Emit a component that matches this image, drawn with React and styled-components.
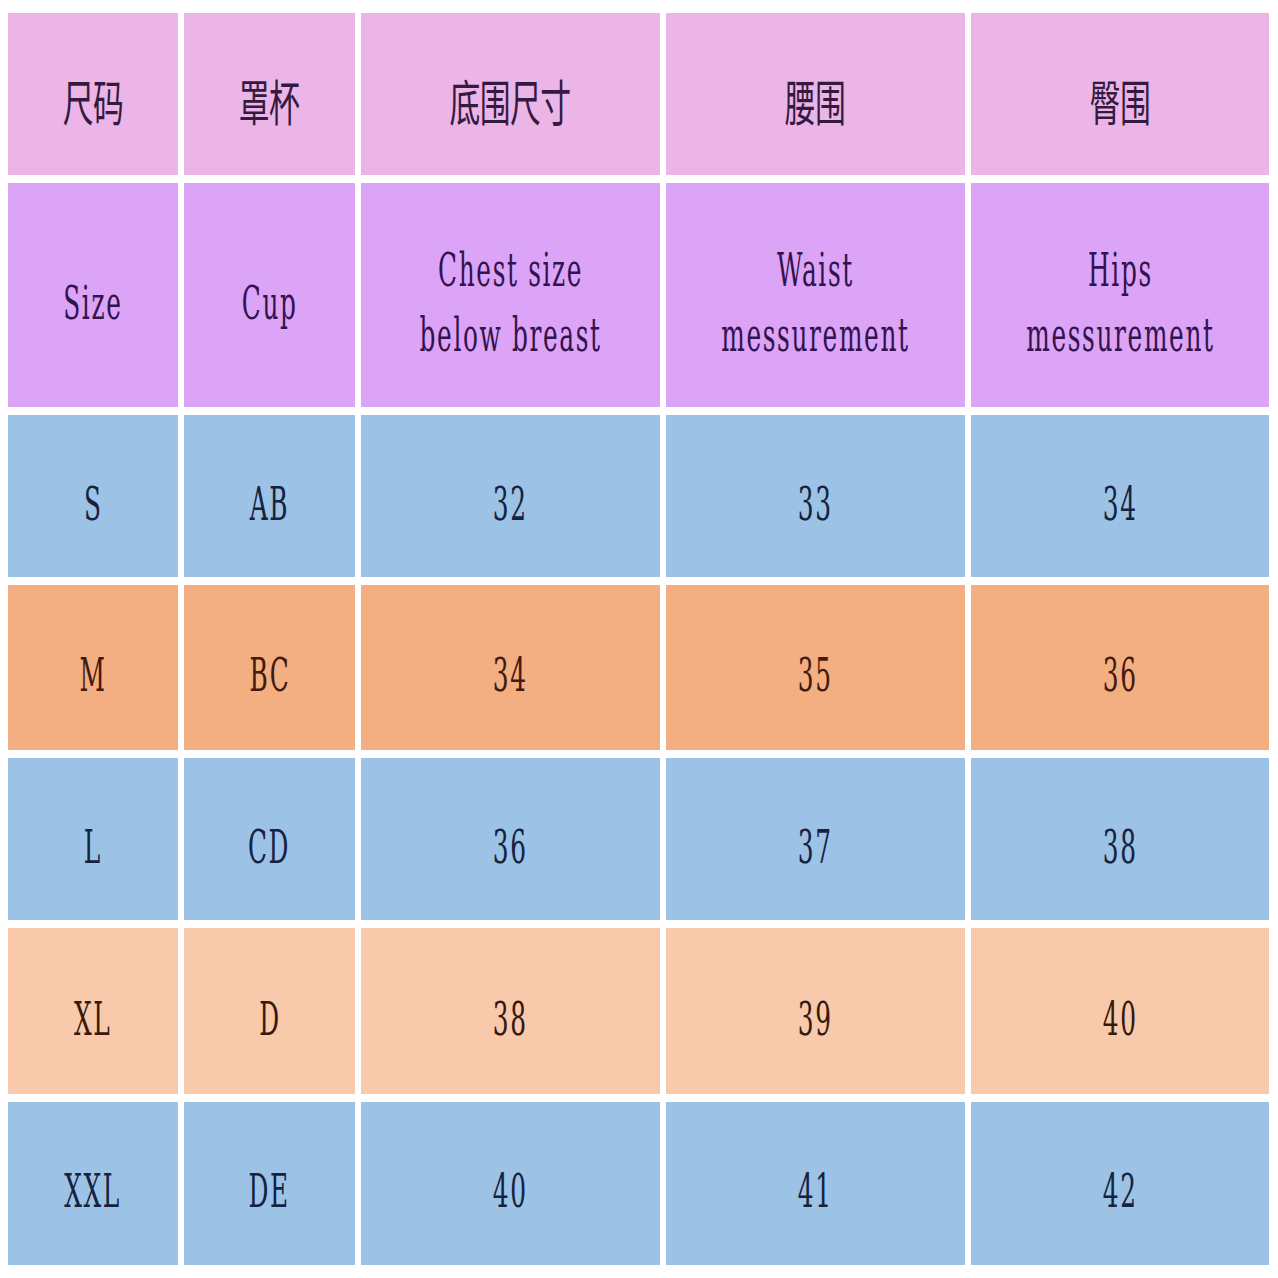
import styled, { createGlobalStyle } from 'styled-components'

const GlobalStyle = createGlobalStyle`
  html, body {
    margin: 0;
    padding: 0;
    background: #ffffff;
  }
`

const tones = {
  head: { bg: '#ebb5e8', ink: '#351a40' },
  sub: { bg: '#dca4f7', ink: '#33134f' },
  blue: { bg: '#9cc2e6', ink: '#15233e' },
  orange: { bg: '#f3ae82', ink: '#431a0e' },
  peach: { bg: '#f8caab', ink: '#36190e' },
}

const rows = [
  { tone: 'head', cjk: true, cells: ['尺码', '罩杯', '底围尺寸', '腰围', '臀围'] },
  {
    tone: 'sub',
    cells: ['Size', 'Cup', 'Chest size\nbelow breast', 'Waist\nmessurement', 'Hips\nmessurement'],
  },
  { tone: 'blue', cells: ['S', 'AB', '32', '33', '34'] },
  { tone: 'orange', cells: ['M', 'BC', '34', '35', '36'] },
  { tone: 'blue', cells: ['L', 'CD', '36', '37', '38'] },
  { tone: 'peach', cells: ['XL', 'D', '38', '39', '40'] },
  { tone: 'blue', cells: ['XXL', 'DE', '40', '41', '42'] },
]

const App = () => {
  return (
    <>
      <GlobalStyle />
      <Page>
        <Table>
          {rows.map((row, r) =>
            row.cells.map((text, c) => (
              <Cell key={`${r}-${c}`} $bg={tones[row.tone].bg} $ink={tones[row.tone].ink} $cjk={row.cjk}>
                {row.cjk ? (
                  <CjkLabel>{text}</CjkLabel>
                ) : (
                  <Label>
                    {text.split('\n').map((line) => (
                      <Line key={line}>{line}</Line>
                    ))}
                  </Label>
                )}
              </Cell>
            ))
          )}
        </Table>
      </Page>
    </>
  )
}

export default App

const Page = styled.div`
  padding: 13px 9px 13px 8px;
  width: 1278px;
  height: 1278px;
  box-sizing: border-box;
  background: #ffffff;
`
const Table = styled.div`
  display: grid;
  grid-template-columns: 170px 171px 299px 299px 298px;
  grid-template-rows: 162px 224px 162px 165px 162px 166px 163px;
  column-gap: 6px;
  row-gap: 8px;
`
const Cell = styled.div`
  display: flex;
  align-items: center;
  justify-content: center;
  background: ${(p) => p.$bg};
  color: ${(p) => p.$ink};
  padding-top: ${(p) => (p.$cjk ? '10px' : '16px')};
  box-sizing: border-box;
  overflow: hidden;
`
const Label = styled.div`
  display: flex;
  flex-direction: column;
  align-items: center;
  font-family: 'DejaVu Serif', 'Liberation Serif', serif;
  font-size: 46px;
  line-height: 65px;
  letter-spacing: 3px;
  transform: scaleX(0.54);
  white-space: pre;
`
const Line = styled.span`
  display: block;
`
const CjkLabel = styled.div`
  font-family: 'Noto Sans CJK SC', 'Noto Sans', sans-serif;
  font-size: 49px;
  font-weight: 400;
  line-height: 1;
  letter-spacing: -1px;
  transform: scaleX(0.63);
  white-space: nowrap;
`
